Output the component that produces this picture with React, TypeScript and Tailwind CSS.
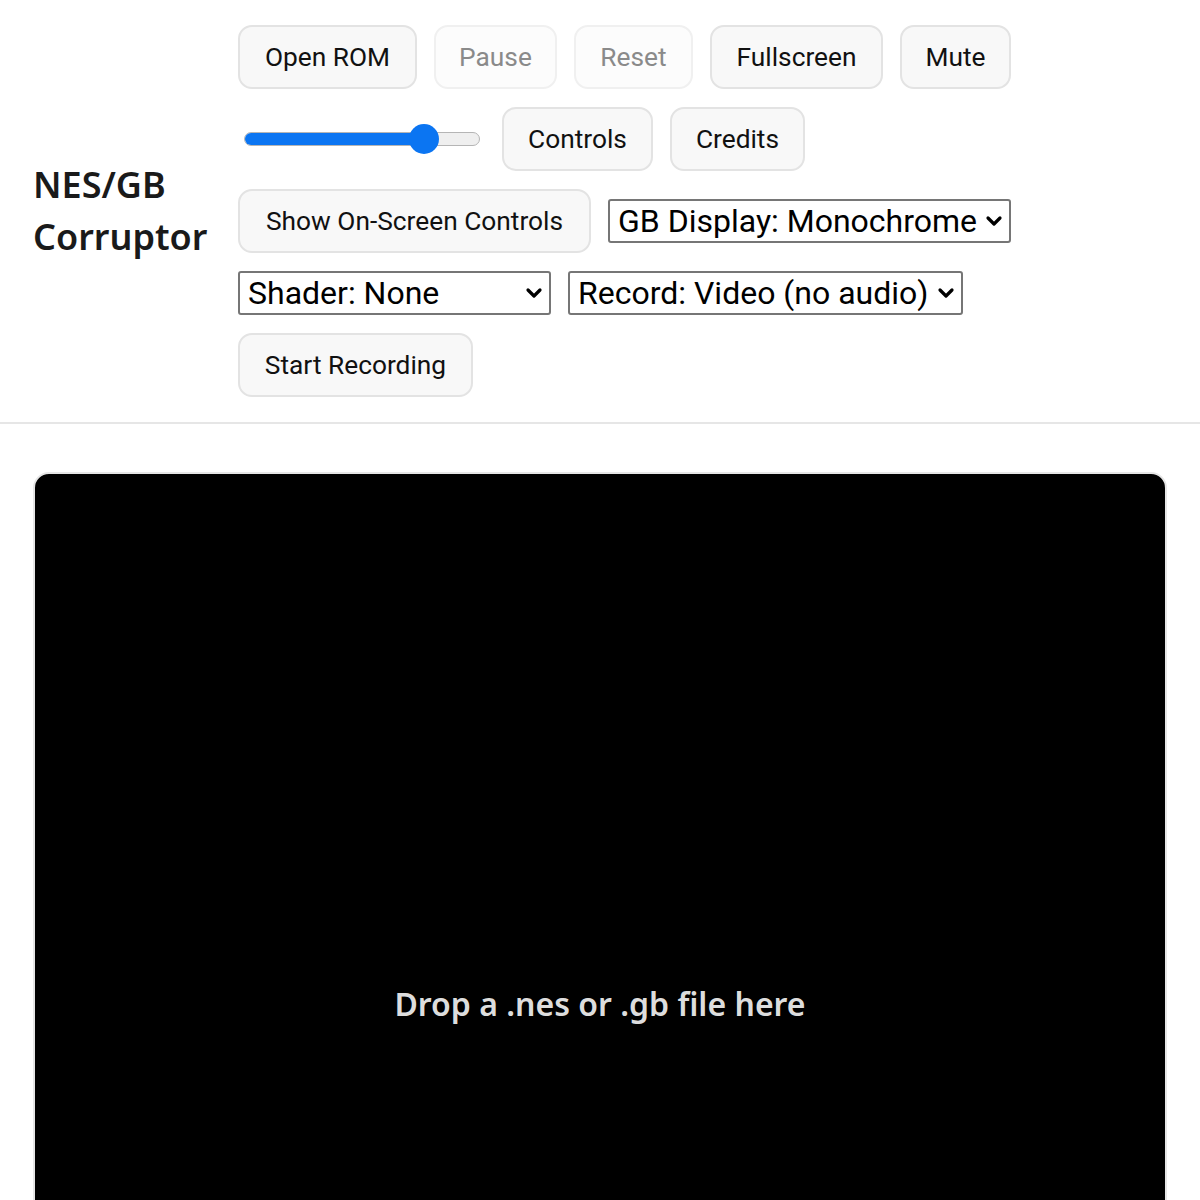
import React from "react";

function Btn({ children, disabled, w }: { children: React.ReactNode; disabled?: boolean; w: string }) {
  return (
    <button
      className={
        disabled
          ? `${w} h-[64px] rounded-[14px] border-2 border-[#f0f0f0] bg-[#fcfcfc] text-[#8a8a8a] text-[26.3px] leading-none whitespace-nowrap flex items-center justify-center`
          : `${w} h-[64px] rounded-[14px] border-2 border-[#e3e3e3] bg-[#f8f8f8] text-[#111] text-[26.3px] leading-none whitespace-nowrap flex items-center justify-center`
      }
      style={{ fontFamily: "Roboto, 'Liberation Sans', sans-serif" }}
    >
      {children}
    </button>
  );
}

function Sel({ label, w }: { label: string; w: string }) {
  return (
    <div
      className={`${w} h-[44px] border-2 border-[#767676] rounded-[3px] bg-white flex items-center justify-between pl-[8px] pr-[6px] text-[32px] text-black leading-none`}
      style={{ fontFamily: "Roboto, 'Liberation Sans', sans-serif" }}
    >
      <span className="whitespace-nowrap">{label}</span>
      <svg width="18" height="12" viewBox="0 0 18 12" className="shrink-0">
        <path d="M3 3 L9 9 L15 3" fill="none" stroke="#000" strokeWidth="3.2" strokeLinecap="round" strokeLinejoin="round" />
      </svg>
    </div>
  );
}

function Slider() {
  return (
    <div className="ml-[6px] mr-[5px] w-[236px] h-[32px] relative flex items-center">
      <div className="w-full h-[14px] rounded-full bg-[#efefef] border border-[#b5b5b5] overflow-hidden">
        <div className="h-full w-[80%] bg-[#0b75f2]" />
      </div>
      <div className="absolute left-[165px] top-[1px] w-[30px] h-[30px] rounded-full bg-[#0b75f2]" />
    </div>
  );
}

export default function App() {
  return (
    <div className="min-h-[1200px] bg-white">
      <header className="flex items-center pl-[33px] pr-[33px] pt-[25px] pb-[25px] border-b-2 border-[#e6e6e6]">
        <h1
          className="w-[205px] text-[36px] leading-[52px] font-semibold text-[#1a1a1a]"
          style={{ fontFamily: "'Noto Sans', 'Open Sans', sans-serif" }}
        >
          NES/GB
          <br />
          Corruptor
        </h1>
        <div className="flex-1 flex flex-wrap items-center gap-x-[17px] gap-y-[18px]">
          <Btn w="w-[179px]">Open ROM</Btn>
          <Btn w="w-[123px]" disabled>Pause</Btn>
          <Btn w="w-[119px]" disabled>Reset</Btn>
          <Btn w="w-[173px]">Fullscreen</Btn>
          <Btn w="w-[111px]">Mute</Btn>
          <Slider />
          <Btn w="w-[151px]">Controls</Btn>
          <Btn w="w-[135px]">Credits</Btn>
          <Btn w="w-[353px]">Show On-Screen Controls</Btn>
          <Sel label="GB Display: Monochrome" w="w-[403px]" />
          <Sel label="Shader: None" w="w-[313px]" />
          <Sel label="Record: Video (no audio)" w="w-[395px]" />
          <Btn w="w-[235px]">Start Recording</Btn>
        </div>
      </header>
      <main className="px-[33px] pt-[48px]">
        <div className="w-full aspect-[256/240] bg-black rounded-[16px] border-2 border-[#e6e6e6] flex items-center justify-center">
          <span
            className="text-[32px] font-semibold text-[#dddddd]"
            style={{ fontFamily: "'Noto Sans', 'Open Sans', sans-serif" }}
          >
            Drop a .nes or .gb file here
          </span>
        </div>
      </main>
    </div>
  );
}
